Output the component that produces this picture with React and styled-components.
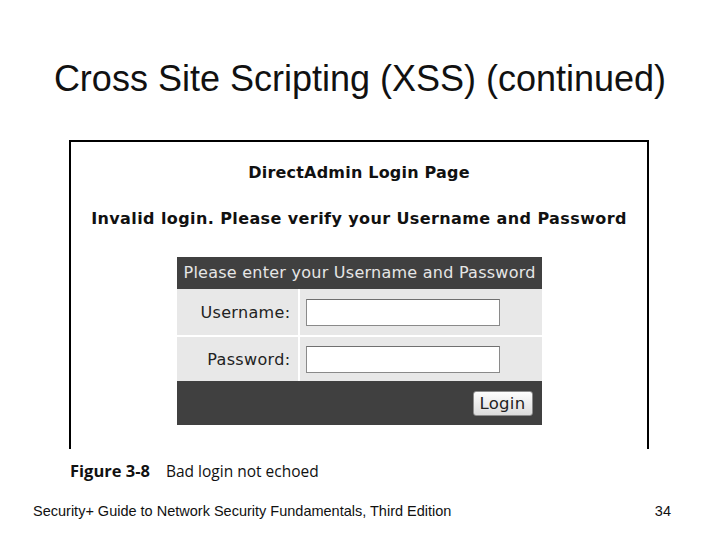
import React from 'react';
import styled, {createGlobalStyle} from 'styled-components';

const GlobalStyle = createGlobalStyle`
    body {
        margin: 0;
        background: #fff;
    }
`;

const Slide = styled.div`
    width: 720px;
    height: 540px;
    display: flex;
    flex-direction: column;
    background: #fff;
    overflow: hidden;
`;

const Title = styled.h1`
    margin: 0;
    padding-top: 61px;
    font-family: "Liberation Sans", Arial, sans-serif;
    font-weight: normal;
    font-size: 36px;
    line-height: 36px;
    color: #111;
    text-align: center;
`;

const Shot = styled.div`
    margin: 43px 0 0 69px;
    width: 580px;
    height: 309px;
    box-sizing: border-box;
    border: 2px solid #000;
    border-bottom: none;
    display: flex;
    flex-direction: column;
    align-items: center;
    font-family: "DejaVu Sans", Verdana, sans-serif;
`;

const Heading = styled.div`
    margin-top: ${p => p.top}px;
    font-size: 16px;
    line-height: 20px;
    font-weight: bold;
    letter-spacing: ${p => p.spacing}px;
    color: #111;
`;

const LoginTable = styled.div`
    margin-top: 28px;
    width: 365px;
    display: grid;
    grid-template-columns: 121px 1fr;
    column-gap: 2px;
    row-gap: 2px;
    background: #fff;
`;

const HeaderCell = styled.div`
    grid-column: 1 / 3;
    height: 32px;
    background: #404040;
    color: #e6e6e6;
    font-size: 16px;
    letter-spacing: 0.25px;
    line-height: 32px;
    padding-left: 7px;
    margin-bottom: -2px;
`;

const Label = styled.div`
    height: ${p => p.h}px;
    background: #e8e8e8;
    color: #222;
    font-size: 16px;
    letter-spacing: 0.35px;
    display: flex;
    align-items: center;
    justify-content: flex-end;
    padding-right: 7px;
`;

const InputCell = styled.div`
    height: ${p => p.h}px;
    background: #e8e8e8;
    display: flex;
    align-items: center;
    padding-left: 6px;
`;

const TextInput = styled.input`
    width: 194px;
    height: 27px;
    box-sizing: border-box;
    border: 1px solid #8a8a8a;
    border-top-color: #707070;
    background: #fff;
    padding: 0;
`;

const FooterCell = styled.div`
    grid-column: 1 / 3;
    height: 44px;
    margin-top: -2px;
    background: #404040;
    display: flex;
    align-items: center;
    justify-content: flex-end;
    padding-right: 9px;
`;

const LoginButton = styled.button`
    width: 60px;
    height: 25px;
    border: 1px solid #8c8c8c;
    border-radius: 3px;
    background: linear-gradient(#fdfdfd, #dcdcdc);
    font-family: "DejaVu Sans", Verdana, sans-serif;
    font-size: 16.5px;
    letter-spacing: 0.3px;
    color: #222;
    padding: 0;
`;

const Caption = styled.div`
    margin: 12px 0 0 70px;
    display: flex;
    gap: 16px;
    font-family: "Open Sans", sans-serif;
    font-size: 15.5px;
    line-height: 20px;
    color: #111;
`;

const CaptionLabel = styled.span`
    font-weight: bold;
    font-size: 16.5px;
`;

const Footer = styled.div`
    margin: 22px 49px 0 33px;
    display: flex;
    justify-content: space-between;
    font-family: "Liberation Sans", Arial, sans-serif;
    font-size: 14.5px;
    line-height: 16px;
    color: #111;
`;

export default function App() {
    return (
        <Slide>
            <GlobalStyle/>
            <Title>Cross Site Scripting (XSS) (continued)</Title>
            <Shot>
                <Heading top={21} spacing={0.2}>DirectAdmin Login Page</Heading>
                <Heading top={26} spacing={0.4}>Invalid login. Please verify your Username and Password</Heading>
                <LoginTable>
                    <HeaderCell>Please enter your Username and Password</HeaderCell>
                    <Label h={46}>Username:</Label>
                    <InputCell h={46}><TextInput type="text"/></InputCell>
                    <Label h={44}>Password:</Label>
                    <InputCell h={44}><TextInput type="password"/></InputCell>
                    <FooterCell><LoginButton>Login</LoginButton></FooterCell>
                </LoginTable>
            </Shot>
            <Caption>
                <CaptionLabel>Figure 3-8</CaptionLabel>
                <span>Bad login not echoed</span>
            </Caption>
            <Footer>
                <span>Security+ Guide to Network Security Fundamentals, Third Edition</span>
                <span>34</span>
            </Footer>
        </Slide>
    );
}
